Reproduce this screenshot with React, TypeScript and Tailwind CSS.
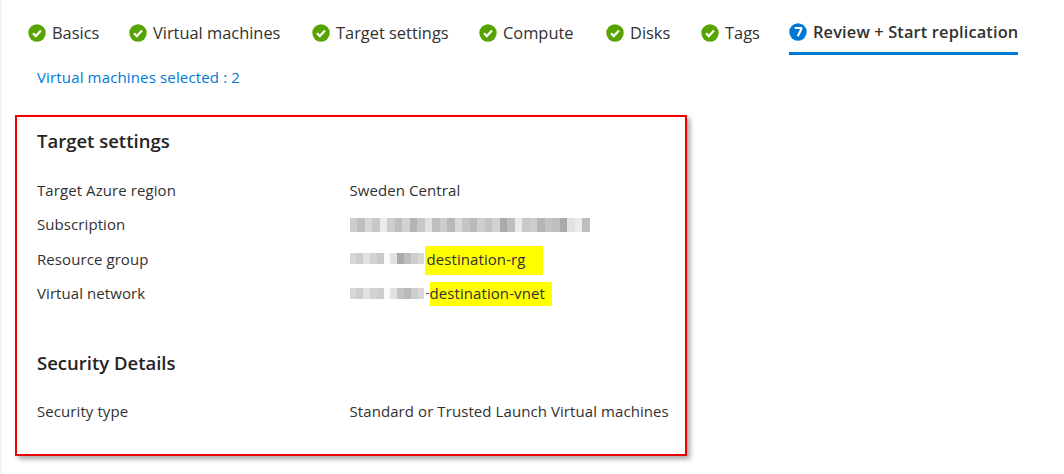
const done = [
  { label: "Basics", width: "w-[101px]" },
  { label: "Virtual machines", width: "w-[183px]" },
  { label: "Target settings", width: "w-[167px]" },
  { label: "Compute", width: "w-[127px]" },
  { label: "Disks", width: "w-[95px]" },
  { label: "Tags", width: "w-[88px]" },
];

function CheckIcon() {
  return (
    <svg width="18" height="18" viewBox="0 0 18 18" className="shrink-0">
      <circle cx="9" cy="9" r="8.7" fill="#57a300" />
      <path d="M5 9.3l2.8 2.8L13 6.6" fill="none" stroke="#fff" strokeWidth="2.2" />
    </svg>
  );
}

// pixelated redaction, shades read off the screenshot
function Redacted({ cells, width, height }: { cells: number[]; width: number; height: number }) {
  return (
    <div className="flex shrink-0 blur-[0.6px]" style={{ width, height }}>
      {cells.map((v, i) => (
        <div key={i} className="flex-1" style={{ backgroundColor: `rgb(${v},${v},${v})` }} />
      ))}
    </div>
  );
}

function Row({ label, children }: { label: string; children: React.ReactNode }) {
  return (
    <div className="flex h-[34.4px] items-center">
      <div className="w-[312.5px] shrink-0 text-[#323130]">{label}</div>
      <div className="flex items-center text-[#323130]">{children}</div>
    </div>
  );
}

export default function App() {
  return (
    <div className="flex h-[474px] w-[1064px] overflow-hidden bg-white font-['Open_Sans','Noto_Sans',sans-serif] text-[15px] tracking-[0.08px]">
      <div className="w-[2px] shrink-0 bg-[#f4f4f4]" />
      <div className="flex-1 pl-[13px]">
        <div className="flex h-[55px] pl-[13px]">
          {done.map((t) => (
            <div key={t.label} className={`flex ${t.width} h-[52px] items-center gap-[6px] pt-[14px]`}>
              <CheckIcon />
              <span className="text-[16.4px] tracking-normal text-[#323130]">{t.label}</span>
            </div>
          ))}
          <div className="flex h-[55px] w-[229px] items-center gap-[6px] border-b-[3px] border-[#0078d4] pt-[12px]">
            <svg width="18" height="18" viewBox="0 0 18 18" className="shrink-0">
              <circle cx="9" cy="9" r="8.7" fill="#0078d4" />
              <path d="M5.8 5h6.4v1.3L8.8 13.2" fill="none" stroke="#fff" strokeWidth="2.2" />
            </svg>
            <span className="text-[16.4px] font-semibold tracking-[0.14px] whitespace-nowrap text-[#323130]">Review + Start replication</span>
          </div>
        </div>
        <div className="mt-[11px] h-[22px] pl-[22px] leading-[22px] tracking-[0.15px] text-[#0078d4]">Virtual machines selected : 2</div>
        <section className="mt-[27px] h-[341px] w-[672px] border-2 border-[#f00000] pt-[12px] pl-[20px] shadow-[3px_3px_5px_rgba(0,0,0,0.35)]">
          <h2 className="text-[18.5px] leading-[24px] font-semibold tracking-normal text-[#252423]">Target settings</h2>
          <div className="mt-[20px]">
            <Row label="Target Azure region">Sweden Central</Row>
            <Row label="Subscription">
              <Redacted
                width={240}
                height={14}
                cells={[205, 190, 215, 200, 235, 205, 190, 210, 180, 200, 225, 190, 205, 185, 215, 195, 185, 205, 195, 210, 170, 190, 235, 200, 205, 180, 195, 190, 170, 225, 235, 190]}
              />
            </Row>
            <Row label="Resource group">
              <Redacted width={75} height={11} cells={[215, 205, 225, 210, 200, 250, 225, 170, 190, 205, 215]} />
              <span className="mt-[3px] flex h-[29px] w-[118px] items-center bg-[#ffff00] pb-[3px] pl-[2px]">destination-rg</span>
            </Row>
            <Row label="Virtual network">
              <Redacted width={75} height={11} cells={[215, 205, 225, 210, 205, 250, 225, 195, 185, 205, 215]} />
              <span className="ml-[1px] h-[1px] w-[3px] bg-[#555555]" />
              <span className="mt-[2px] ml-[1px] flex h-[24px] w-[122px] items-center bg-[#ffff00] pb-[2px]">destination-vnet</span>
            </Row>
          </div>
          <h2 className="mt-[40px] text-[18.5px] leading-[24px] font-semibold tracking-normal text-[#252423]">Security Details</h2>
          <div className="mt-[19px]">
            <Row label="Security type">Standard or Trusted Launch Virtual machines</Row>
          </div>
        </section>
      </div>
    </div>
  );
}
